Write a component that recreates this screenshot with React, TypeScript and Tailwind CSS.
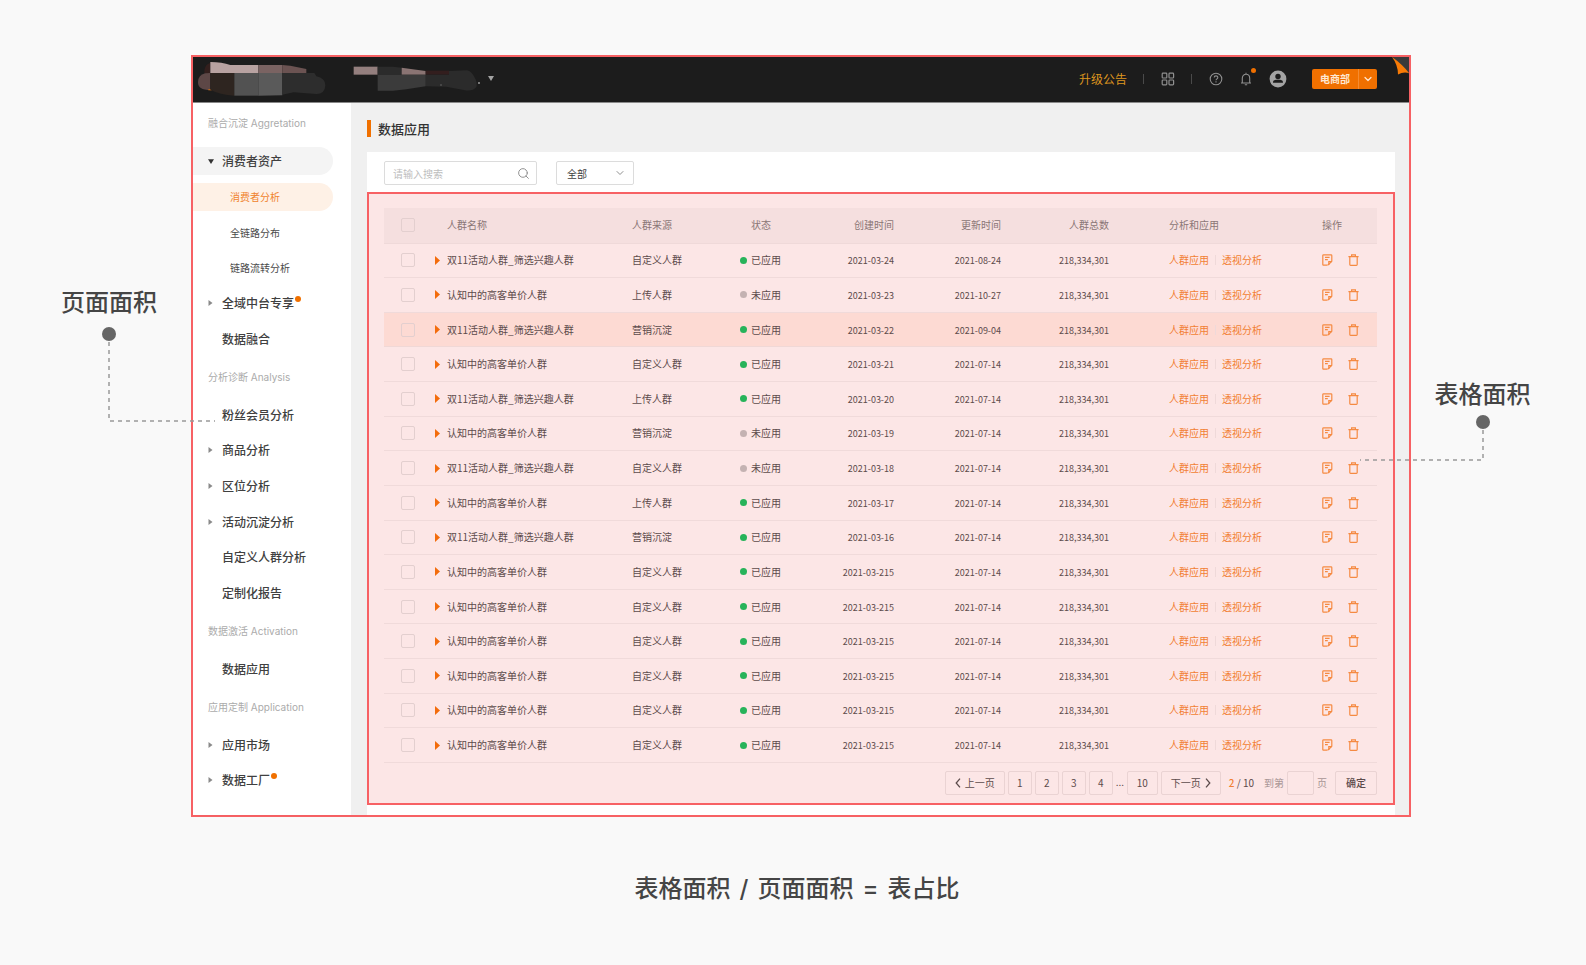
import React from "react";
import { ChevronDown, ChevronLeft, ChevronRight, Search } from "lucide-react";

type NavEntry = {
  kind: "section" | "item" | "sub";
  label: string;
  arrow?: "open" | "closed";
  dot?: boolean;
  active?: boolean;
};

const NAV: NavEntry[] = [
  { kind: "section", label: "融合沉淀 Aggretation" },
  { kind: "item", label: "消费者资产", arrow: "open" },
  { kind: "sub", label: "消费者分析", active: true },
  { kind: "sub", label: "全链路分布" },
  { kind: "sub", label: "链路流转分析" },
  { kind: "item", label: "全域中台专享", arrow: "closed", dot: true },
  { kind: "item", label: "数据融合" },
  { kind: "section", label: "分析诊断 Analysis" },
  { kind: "item", label: "粉丝会员分析" },
  { kind: "item", label: "商品分析", arrow: "closed" },
  { kind: "item", label: "区位分析", arrow: "closed" },
  { kind: "item", label: "活动沉淀分析", arrow: "closed" },
  { kind: "item", label: "自定义人群分析" },
  { kind: "item", label: "定制化报告" },
  { kind: "section", label: "数据激活 Activation" },
  { kind: "item", label: "数据应用" },
  { kind: "section", label: "应用定制 Application" },
  { kind: "item", label: "应用市场", arrow: "closed" },
  { kind: "item", label: "数据工厂", arrow: "closed", dot: true },
];

const A = "双11活动人群_筛选兴趣人群";
const B = "认知中的高客单价人群";

const ROWS: { name: string; source: string; on: boolean; created: string; updated: string }[] = [
  { name: A, source: "自定义人群", on: true, created: "2021-03-24", updated: "2021-08-24" },
  { name: B, source: "上传人群", on: false, created: "2021-03-23", updated: "2021-10-27" },
  { name: A, source: "营销沉淀", on: true, created: "2021-03-22", updated: "2021-09-04" },
  { name: B, source: "自定义人群", on: true, created: "2021-03-21", updated: "2021-07-14" },
  { name: A, source: "上传人群", on: true, created: "2021-03-20", updated: "2021-07-14" },
  { name: B, source: "营销沉淀", on: false, created: "2021-03-19", updated: "2021-07-14" },
  { name: A, source: "自定义人群", on: false, created: "2021-03-18", updated: "2021-07-14" },
  { name: B, source: "上传人群", on: true, created: "2021-03-17", updated: "2021-07-14" },
  { name: A, source: "营销沉淀", on: true, created: "2021-03-16", updated: "2021-07-14" },
  { name: B, source: "自定义人群", on: true, created: "2021-03-215", updated: "2021-07-14" },
  { name: B, source: "自定义人群", on: true, created: "2021-03-215", updated: "2021-07-14" },
  { name: B, source: "自定义人群", on: true, created: "2021-03-215", updated: "2021-07-14" },
  { name: B, source: "自定义人群", on: true, created: "2021-03-215", updated: "2021-07-14" },
  { name: B, source: "自定义人群", on: true, created: "2021-03-215", updated: "2021-07-14" },
  { name: B, source: "自定义人群", on: true, created: "2021-03-215", updated: "2021-07-14" },
];

function Brand() {
  return (
    <svg width="130" height="36" viewBox="50 51 390 108" aria-hidden="true">
      <path d="M90 56Q70 62 72 87H90Z" fill="#331f1d" />
      <path d="M90 54Q125 54 150 63H234V87H90Z" fill="#b8a2a1" />
      <path d="M234 63H306V87H234Z" fill="#7a6362" />
      <path d="M306 63L330 65L378 75V87H306Z" fill="#6b5352" />
      <path d="M90 87V138Q52 138 53 114Q54 93 74 88Z" fill="#5d4746" />
      <path d="M84 135h10v4h-10Z" fill="#b5651d" />
      <path d="M90 87H162V155Q118 152 90 137Z" fill="#2e2520" />
      <path d="M162 87H234V155H162Z" fill="#525252" />
      <path d="M234 87H306V154L234 155Z" fill="#5a5a5a" />
      <path d="M306 87H402L408 97Q435 103 435 124Q434 150 408 150L340 145L306 152Z" fill="#2d2d2d" />
    </svg>
  );
}

function Account() {
  return (
    <svg width="127" height="26" viewBox="520 61 381 78" aria-hidden="true">
      <path d="M522 63H594V87H522Z" fill="#947f7e" />
      <path d="M594 63H640L666 66V87H594Z" fill="#2b2b2b" />
      <path d="M666 66L738 76V87H666Z" fill="#8a7473" />
      <path d="M738 75H808V87H738Z" fill="#331e1e" />
      <path d="M808 76L862 74Q876 77 884 94Q894 110 890 124Q880 137 856 134L800 123L738 122V87H808Z" fill="#2b2b2b" />
      <path d="M594 87H738V122L680 131L640 135H594Z" fill="#3b3b3b" />
      <circle cx="784" cy="118" r="2.4" fill="#6a6a6a" />
      <circle cx="898" cy="112" r="3" fill="#9a9a9a" />
    </svg>
  );
}

function AppsIcon() {
  return (
    <svg width="14" height="14" viewBox="0 0 14 14" fill="none" stroke="#8f8f8f" strokeWidth="1.2">
      <rect x="1.2" y="1.2" width="4.6" height="4.8" rx="0.8" />
      <rect x="8" y="1.2" width="4.6" height="4.8" rx="0.8" />
      <rect x="1.2" y="8" width="4.6" height="4.8" rx="0.8" />
      <rect x="8" y="8" width="4.6" height="4.8" rx="0.8" />
    </svg>
  );
}

function HelpIcon() {
  return (
    <svg width="14" height="14" viewBox="0 0 14 14" fill="none" stroke="#8f8f8f" strokeWidth="1.1">
      <circle cx="7" cy="7" r="5.8" />
      <path d="M5.2 5.6C5.2 3.3 8.8 3.3 8.8 5.5C8.8 6.9 7 6.8 7 8.3" />
      <path d="M7 9.3V10.4" />
    </svg>
  );
}

function BellIcon() {
  return (
    <svg width="12" height="14" viewBox="0 0 12 14" fill="none" stroke="#8f8f8f" strokeWidth="1.1">
      <path d="M1 11H11M2.3 11V6.2C2.3 3.7 3.9 2.2 6 2.2S9.7 3.7 9.7 6.2V11M6 2.2V0.8M4.8 12.8H7.2" />
    </svg>
  );
}

function AvatarIcon() {
  return (
    <svg width="18" height="18" viewBox="0 0 18 18">
      <circle cx="9" cy="9" r="8.4" fill="#a3a3a3" />
      <circle cx="9" cy="6.5" r="2.7" fill="#1c1c1c" />
      <path d="M4 12.8C4 9.6 6.4 9.7 9 9.7S14 9.6 14 12.8Z" fill="#1c1c1c" />
    </svg>
  );
}

function NoteIcon() {
  return (
    <svg width="11" height="12" viewBox="0 0 11 12" fill="none" stroke="#f58a42" strokeWidth="1.2">
      <path d="M5.6 11.2H1.6Q0.8 11.2 0.8 10.4V1.6Q0.8 0.8 1.6 0.8H9Q9.8 0.8 9.8 1.6V7.2L6 11.2" />
      <path d="M9.8 7.6H6.8V11M3 3.4H7.6M3 5.6H5.8" />
    </svg>
  );
}

function TrashIcon() {
  return (
    <svg width="11" height="12" viewBox="0 0 11 12" fill="none" stroke="#f58a42" strokeWidth="1.2">
      <path d="M0.4 2.6H10.6M3.6 2.4V0.8H7.4V2.4M1.8 2.6V10.6Q1.8 11.4 2.6 11.4H8.4Q9.2 11.4 9.2 10.6V2.6" />
    </svg>
  );
}

function Header() {
  return (
    <header className="flex h-[46px] items-center border-b border-[#8a8a8a] bg-[#1c1c1c] pb-0.5 pl-1 pr-8">
      <Brand />
      <button type="button" aria-label="切换账号" className="ml-[26px] flex items-center gap-2">
        <Account />
        <svg width="6" height="5" viewBox="0 0 6 5">
          <path d="M0 0H6L3 5Z" fill="#a3a3a3" />
        </svg>
      </button>
      <div className="ml-auto flex items-center">
        <a href="#notice" className="text-[12px] leading-4 text-[#dd951f]">升级公告</a>
        <span className="ml-4 h-2.5 w-px bg-[#4a4a4a]" />
        <button type="button" aria-label="应用" className="ml-[17px]"><AppsIcon /></button>
        <span className="ml-4 h-2.5 w-px bg-[#4a4a4a]" />
        <button type="button" aria-label="帮助" className="ml-[17px]"><HelpIcon /></button>
        <button type="button" aria-label="通知" className="relative ml-[17px]">
          <BellIcon />
          <span className="absolute -right-1 -top-1 size-[5px] rounded-full bg-[#f07000]" />
        </button>
        <button type="button" aria-label="个人中心" className="ml-[17px]"><AvatarIcon /></button>
        <button
          type="button"
          className="ml-[25px] flex h-5 items-center rounded-[2px] bg-[#f07000] text-[10px] font-bold leading-5 text-[#ffe8d2]"
        >
          <span className="w-[47px] border-r border-[#f58b30] text-center">电商部</span>
          <span className="flex w-[18px] justify-center">
            <ChevronDown size={12} strokeWidth={2.4} />
          </span>
        </button>
      </div>
    </header>
  );
}

function Sidebar() {
  return (
    <aside className="flex w-[158px] shrink-0 flex-col bg-white pb-[17px] shadow-[1px_0_2px_rgba(0,0,0,0.04)]">
      <nav className="flex grow flex-col">
        {NAV.map((n) => {
          if (n.kind === "section") {
            return (
              <h2
                key={n.label}
                className="flex grow-[17] basis-0 items-center pl-[15px] font-['Inter','Noto_Sans_CJK_SC',sans-serif] text-[10px] leading-4 text-[#ababab]"
              >
                {n.label}
              </h2>
            );
          }
          if (n.kind === "sub") {
            return (
              <div key={n.label} className="flex grow-[15] basis-0 items-center">
                <a
                  href="#page"
                  className={
                    n.active
                      ? "flex h-7 w-[140px] items-center rounded-r-full bg-[#fef1e6] pl-[37px] text-[10px] text-[#f0832e]"
                      : "flex h-7 w-[140px] items-center pl-[37px] text-[10px] text-[#4a4a4a]"
                  }
                >
                  {n.label}
                </a>
              </div>
            );
          }
          return (
            <div key={n.label} className="flex grow-[15] basis-0 items-center">
              <a
                href="#page"
                className={
                  n.arrow === "open"
                    ? "flex h-7 w-[140px] items-center rounded-r-full bg-[#f4f4f4] pl-[15px] text-[12px] font-medium text-[#404040]"
                    : "flex h-7 w-[140px] items-center pl-[15px] text-[12px] font-medium text-[#404040]"
                }
              >
                <span className="w-3.5">
                  {n.arrow === "open" && (
                    <svg width="6" height="5" viewBox="0 0 6 5"><path d="M0 0.3H6L3 5Z" fill="#333333" /></svg>
                  )}
                  {n.arrow === "closed" && (
                    <svg width="5" height="6" viewBox="0 0 5 6"><path d="M0.5 0L4.5 3L0.5 6Z" fill="#8a8a8a" /></svg>
                  )}
                </span>
                {n.label}
                {n.dot && <span className="mb-2 ml-px size-[6px] rounded-full bg-[#f07000]" />}
              </a>
            </div>
          );
        })}
      </nav>
    </aside>
  );
}

function Check({ label }: { label: string }) {
  return (
    <input
      type="checkbox"
      aria-label={label}
      className="ml-[17px] block size-3.5 appearance-none rounded-[2px] border border-[#e3cfcf] checked:bg-[#f07000]"
    />
  );
}

function CrowdTable() {
  return (
    <table className="h-[555px] w-full table-fixed border-collapse text-left text-[10px] leading-4 text-[#5c4b4b]">
      <colgroup>
        <col className="w-[51px]" />
        <col className="w-[197px]" />
        <col className="w-[108px]" />
        <col className="w-[60px]" />
        <col className="w-[94px]" />
        <col className="w-[107px]" />
        <col className="w-[108px]" />
        <col className="w-[213px]" />
        <col className="w-[55px]" />
      </colgroup>
      <thead>
        <tr className="h-[35px] border-b border-[#efd9d9] bg-[#f5dfdf] text-[#8a7676]">
          <th className="p-0 font-normal"><Check label="全选" /></th>
          <th className="p-0 pl-3 font-normal">人群名称</th>
          <th className="p-0 font-normal">人群来源</th>
          <th className="p-0 pl-[11px] font-normal">状态</th>
          <th className="p-0 text-right font-normal">创建时间</th>
          <th className="p-0 text-right font-normal">更新时间</th>
          <th className="p-0 text-right font-normal">人群总数</th>
          <th className="p-0 pl-[60px] font-normal">分析和应用</th>
          <th className="p-0 font-normal">操作</th>
        </tr>
      </thead>
      <tbody>
        {ROWS.map((r, i) => (
          <tr key={i} className={i === 2 ? "border-b border-[#f0d8d6] bg-[#fddad3]" : "border-b border-[#f0dada]"}>
            <td className="p-0"><Check label={r.name} /></td>
            <td className="p-0">
              <div className="flex items-center">
                <button type="button" aria-label="展开" className="w-3">
                  <svg width="5" height="9" viewBox="0 0 5 9" className="block"><path d="M0 0L5 4.5L0 9Z" fill="#f36c0c" /></svg>
                </button>
                {r.name}
              </div>
            </td>
            <td className="p-0">{r.source}</td>
            <td className="p-0">
              <div className="flex items-center gap-1">
                <span className={r.on ? "size-[7px] shrink-0 rounded-full bg-[#27b35a]" : "size-[7px] shrink-0 rounded-full bg-[#c4b2b2]"} />
                <span className="whitespace-nowrap">{r.on ? "已应用" : "未应用"}</span>
              </div>
            </td>
            <td className="p-0 pt-0.5 text-right text-[9px]">{r.created}</td>
            <td className="p-0 pt-0.5 text-right text-[9px]">{r.updated}</td>
            <td className="p-0 pt-0.5 text-right text-[9px]">218,334,301</td>
            <td className="p-0 pl-[60px]">
              <div className="flex items-center gap-1.5 text-[#f27f33]">
                <a href="#apply">人群应用</a>
                <span className="h-2.5 w-px bg-[#efd9d9]" />
                <a href="#insight">透视分析</a>
              </div>
            </td>
            <td className="p-0">
              <div className="flex items-center gap-[15px]">
                <button type="button" aria-label="编辑"><NoteIcon /></button>
                <button type="button" aria-label="删除"><TrashIcon /></button>
              </div>
            </td>
          </tr>
        ))}
      </tbody>
    </table>
  );
}

function Pagination() {
  return (
    <div className="mt-2 flex h-6 items-stretch justify-end gap-[3px] text-[10px] leading-[22px] text-[#5c4b4b]">
      <button type="button" className="flex w-[60px] items-center justify-center rounded-[2px] border border-[#ead3d3]">
        <svg width="6" height="10" viewBox="0 0 6 10" fill="none" stroke="currentColor" strokeWidth="1.3" className="mr-1"><path d="M5 0.6L1.2 5L5 9.4" /></svg>
        上一页
      </button>
      {["1", "2", "3", "4"].map((p) => (
        <button key={p} type="button" className="w-6 rounded-[2px] border border-[#ead3d3]">{p}</button>
      ))}
      <span className="w-2 text-center">...</span>
      <button type="button" className="w-[31px] rounded-[2px] border border-[#ead3d3]">10</button>
      <button type="button" className="flex w-[60px] items-center justify-center rounded-[2px] border border-[#ead3d3]">
        下一页
        <svg width="6" height="10" viewBox="0 0 6 10" fill="none" stroke="currentColor" strokeWidth="1.3" className="ml-1"><path d="M1 0.6L4.8 5L1 9.4" /></svg>
      </button>
      <span className="ml-[5px] leading-6"><b className="font-medium text-[#f27f33]">2</b> / 10</span>
      <label htmlFor="page-no" className="ml-[7px] leading-6 text-[#a89595]">到第</label>
      <input id="page-no" type="text" className="w-[27px] rounded-[2px] border border-[#ead3d3] text-center" />
      <span className="leading-6 text-[#a89595]">页</span>
      <button type="button" className="ml-[5px] w-[42px] rounded-[2px] border border-[#ead3d3] font-medium">确定</button>
    </div>
  );
}

function Main() {
  return (
    <main className="min-w-0 grow bg-[#f0f0f0] pl-4 pr-[14px] pt-[17px]">
      <div className="flex h-[17px] items-center gap-[7px]">
        <span className="h-[17px] w-1 bg-[#f07000]" />
        <h1 className="text-[13px] font-medium leading-4 text-[#333333]">数据应用</h1>
      </div>
      <div className="mt-[15px] bg-white pb-2.5 pt-[9px]">
        <div className="flex items-center gap-[19px] pb-[7px] pl-[17px]">
          <label className="flex h-6 w-[153px] items-center rounded-[2px] border border-[#dcdcdc] pl-2 pr-1.5">
            <input
              type="text"
              aria-label="搜索"
              placeholder="请输入搜索"
              className="min-w-0 grow text-[10px] outline-none placeholder:text-[#bdbdbd]"
            />
            <Search size={13} strokeWidth={1.8} className="text-[#8f8f8f]" />
          </label>
          <div className="relative">
            <select
              aria-label="筛选"
              className="block h-6 w-[78px] appearance-none rounded-[2px] border border-[#dcdcdc] bg-white pl-2.5 text-[10px] text-[#404040]"
            >
              <option>全部</option>
            </select>
            <ChevronDown size={12} className="pointer-events-none absolute right-2 top-1.5 text-[#8f8f8f]" />
          </div>
        </div>
        <section className="border-2 border-[#f76164] bg-[#fce6e6] pb-2 pl-[15px] pr-4 pt-3.5">
          <CrowdTable />
          <Pagination />
        </section>
      </div>
    </main>
  );
}

export default function App() {
  return (
    <div className="min-h-screen bg-[#f9f9f9] pt-[55px] font-['Inter','Noto_Sans_CJK_SC',sans-serif]">
      <div className="flex">
        <div className="flex w-[191px] shrink-0 flex-col items-center pl-[27px] pt-[232px]">
          <p className="text-[24px] font-medium leading-8 text-[#454545]">页面面积</p>
          <div className="relative mt-2 size-[14px] rounded-full bg-[#666666]">
            <svg width="112" height="84" className="pointer-events-none absolute left-1.5 top-full z-10" fill="none" stroke="#999999" strokeWidth="1.5" strokeDasharray="4 4">
              <path d="M1 1V80H107" />
            </svg>
          </div>
        </div>
        <div className="relative flex min-w-0 grow flex-col border-2 border-[#f76164] font-['Noto_Sans_CJK_SC','Noto_Sans_CJK_TC',sans-serif]">
          <Header />
          <svg width="17" height="18" viewBox="0 0 17 18" className="absolute right-0 top-0" aria-hidden="true">
            <path d="M0 0H17V17Z" fill="#3a3a3a" />
            <path d="M0 0Q10 7 17 16Q11 14.500 6 17.500Q6 8 0 0Z" fill="#f97b06" />
          </svg>
          <div className="flex grow">
            <Sidebar />
            <Main />
          </div>
        </div>
        <div className="flex w-[175px] shrink-0 flex-col items-center pr-8 pt-[324px]">
          <p className="text-[24px] font-medium leading-8 text-[#454545]">表格面积</p>
          <div className="relative mt-1 size-[14px] rounded-full bg-[#666666]">
            <svg width="126" height="36" className="pointer-events-none absolute right-1.5 top-full z-10" fill="none" stroke="#999999" strokeWidth="1.5" strokeDasharray="4 4">
              <path d="M125 1V31H2" />
            </svg>
          </div>
        </div>
      </div>
      <p className="mt-14 flex justify-center gap-[9px] pb-10 pl-2 text-[24px] font-medium leading-8 text-[#454545]">
        <span>表格面积</span>
        <span>/</span>
        <span>页面面积</span>
        <span>=</span>
        <span>表占比</span>
      </p>
    </div>
  );
}
